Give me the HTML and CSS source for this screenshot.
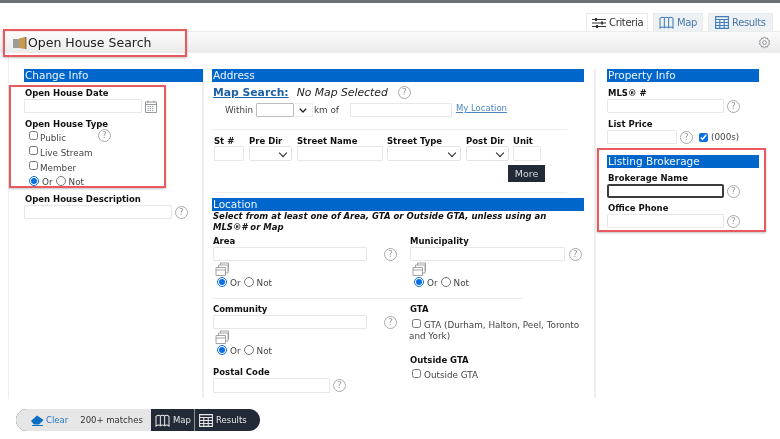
FILE: index.html
```html
<!DOCTYPE html>
<html lang="en">
<head>
<meta charset="utf-8">
<title>Open House Search</title>
<link rel="stylesheet" href="styles.css">
</head>
<body>
<svg class="defs" width="0" height="0">
  <symbol id="i-copy" viewBox="0 0 14 14"><path d="M1 5.500h9.500v8H1zM1 8h9.500M3.500 5.500V3h9.500v8h-2.500M5.500 3V1h8v8h-.5" fill="none" stroke="#9a9a9a" stroke-width=".9"/></symbol>
  <symbol id="i-map" viewBox="0 0 16 14"><path d="M1 2.500c2-1.500 3-1.500 4.700-.5v10.500c-1.700-1-2.700-1-4.700.5zM5.700 2c1.700-1 2.900-1 4.600 0v10.500c-1.700-1-2.900-1-4.600 0zM10.300 2c1.700-1 2.700-1 4.700.5V13c-2-1.500-3-1.500-4.700-.5z" fill="none" stroke="currentColor" stroke-width="1.100"/></symbol>
  <symbol id="i-grid" viewBox="0 0 14 13"><path d="M.6.600h12.800v11.800H.6zM.6 3.500h12.800M.6 6.500h12.800M.6 9.500h12.800M4.800 3.500v8.900M9.200 3.500v8.900" fill="none" stroke="currentColor" stroke-width="1.100"/></symbol>
</svg>

<div class="topline"></div>

<nav class="tabs">
  <a class="tab tab-on">
    <svg width="14" height="12" viewBox="0 0 14 12"><path d="M0 2.500h14M0 6h14M0 9.500h14" stroke="#333" stroke-width="1"/><path d="M4 1v3M10 4.500v3M5 8v3" stroke="#333" stroke-width="2"/></svg>
    Criteria</a>
  <a class="tab"><svg width="15" height="13"><use href="#i-map"/></svg>Map</a>
  <a class="tab"><svg width="14" height="13"><use href="#i-grid"/></svg>Results</a>
</nav>

<header class="titlebar">
  <svg class="door" width="14" height="12" viewBox="0 0 14 12"><rect x="0" y="2" width="6" height="9" fill="#9b9b9b"/><path d="M6 1.500 12 0v12l-6-1z" fill="#c89a4c"/><rect x="12" y="0" width="1.500" height="12" fill="#8d7a55"/></svg>
  <h1 class="title">Open House Search</h1>
  <svg class="gear" width="13" height="13" viewBox="0 0 24 24"><path d="M12 1.500l2 3 3.500-.8.800 3.500 3.200 1.800-1.500 3 1.500 3-3.200 1.800-.8 3.500-3.500-.8-2 3-2-3-3.500.8-.8-3.500L2.500 15l1.500-3-1.500-3 3.200-1.800.8-3.500 3.500.8z" fill="none" stroke="#8a8f94" stroke-width="1.700"/><circle cx="12" cy="12" r="3.500" fill="none" stroke="#8a8f94" stroke-width="1.700"/></svg>
</header>

<main class="columns">
  <section class="col col-left">
    <h2 class="bar">Change Info</h2>
    <label class="lbl">Open House Date</label>
    <div class="row">
      <input class="inp w118" type="text">
      <svg class="cal" width="12" height="13" viewBox="0 0 12 13"><path d="M.5 2h11v10.500H.5zM.5 4.500h11M3 .5V3M9 .5V3" fill="none" stroke="#8a9096" stroke-width=".9"/><path d="M2.500 6.500h7M2.500 8.500h7M2.500 10.500h7" stroke="#8a9096" stroke-dasharray="1.300 1"/></svg>
    </div>
    <label class="lbl">Open House Type</label>
    <div class="typewrap">
      <div class="check"><input type="checkbox"><span>Public</span><i class="help help-type">?</i></div>
      <div class="check"><input type="checkbox"><span>Live Stream</span></div>
      <div class="check"><input type="checkbox"><span>Member</span></div>
      <div class="ornot"><input type="radio" name="t" checked><span>Or</span><input type="radio" name="t"><span>Not</span></div>
    </div>
    <label class="lbl desc">Open House Description</label>
    <div class="row"><input class="inp w148" type="text"><i class="help">?</i></div>
  </section>

  <section class="col col-mid">
    <h2 class="bar">Address</h2>
    <div class="mapline">
      <a class="maplink">Map Search:</a>
      <em class="nomap">No Map Selected</em>
      <i class="help">?</i>
    </div>
    <div class="within">
      <span>Within</span>
      <span class="combo"><input class="inp w38" type="text"><span class="combo-arrow"><svg width="8" height="5" viewBox="0 0 8 5"><path d="M.8.800 4 4l3.200-3.200" fill="none" stroke="#222" stroke-width="1.300"/></svg></span></span>
      <span class="km">km of</span>
      <input class="inp w102" type="text">
      <a class="myloc">My Location</a>
    </div>
    <hr class="rule rule-a">
    <div class="street">
      <div class="sf"><label class="lbl">St #</label><input class="inp" type="text"></div>
      <div class="sf"><label class="lbl">Pre Dir</label><span class="sel"></span></div>
      <div class="sf"><label class="lbl">Street Name</label><input class="inp" type="text"></div>
      <div class="sf"><label class="lbl">Street Type</label><span class="sel"></span></div>
      <div class="sf"><label class="lbl">Post Dir</label><span class="sel"></span></div>
      <div class="sf"><label class="lbl">Unit</label><input class="inp" type="text"></div>
    </div>
    <div class="morerow"><button class="more" type="button">More</button></div>
    <hr class="rule rule-b">
    <h2 class="bar">Location</h2>
    <p class="note">Select from at least one of Area, GTA or Outside GTA, unless using an MLS®# or Map</p>
    <div class="loc">
      <div class="loc-cell">
        <label class="lbl">Area</label>
        <div class="row"><input class="inp w154" type="text"><i class="help help-far">?</i></div>
        <svg class="copy" width="14" height="14"><use href="#i-copy"/></svg>
        <div class="ornot"><input type="radio" name="a" checked><span>Or</span><input type="radio" name="a"><span>Not</span></div>
      </div>
      <div class="loc-cell">
        <label class="lbl">Municipality</label>
        <div class="row"><input class="inp w155" type="text"><i class="help help-m">?</i></div>
        <svg class="copy" width="14" height="14"><use href="#i-copy"/></svg>
        <div class="ornot"><input type="radio" name="m" checked><span>Or</span><input type="radio" name="m"><span>Not</span></div>
      </div>
      <hr class="rule rule-c">
      <div class="loc-cell">
        <label class="lbl">Community</label>
        <div class="row"><input class="inp w154" type="text"><i class="help help-far">?</i></div>
        <svg class="copy" width="14" height="14"><use href="#i-copy"/></svg>
        <div class="ornot"><input type="radio" name="c" checked><span>Or</span><input type="radio" name="c"><span>Not</span></div>
        <label class="lbl postal">Postal Code</label>
        <div class="row"><input class="inp w117 tall" type="text"><i class="help">?</i></div>
      </div>
      <div class="loc-cell">
        <label class="lbl">GTA</label>
        <p class="wrapcheck"><input type="checkbox">GTA (Durham, Halton, Peel, Toronto and York)</p>
        <label class="lbl outside">Outside GTA</label>
        <p class="wrapcheck wrapcheck-b"><input type="checkbox">Outside GTA</p>
      </div>
    </div>
  </section>

  <section class="col col-right">
    <h2 class="bar">Property Info</h2>
    <label class="lbl">MLS® #</label>
    <div class="row"><input class="inp w117" type="text"><i class="help">?</i></div>
    <label class="lbl">List Price</label>
    <div class="row price"><input class="inp w70" type="text"><i class="help">?</i><input class="thou" type="checkbox" checked><span class="txt">(000s)</span></div>
    <h2 class="bar brokerage">Listing Brokerage</h2>
    <label class="lbl tight">Brokerage Name</label>
    <div class="row"><input class="inp w117 focus" type="text"><i class="help">?</i></div>
    <label class="lbl tight">Office Phone</label>
    <div class="row"><input class="inp w117" type="text"><i class="help">?</i></div>
  </section>
</main>

<footer class="pillbar">
  <div class="pill">
    <div class="pill-light">
      <a class="clear"><svg width="13" height="11" viewBox="0 0 13 11"><path d="M0 6 6 .5 12.500 5 8 9.500H3z" fill="#0a6fc2"/><path d="M1 10.500h11" stroke="#0a6fc2"/></svg>Clear</a>
      <span class="matches">200+ matches</span>
    </div>
    <a class="pill-btn"><svg width="15" height="13"><use href="#i-map"/></svg>Map</a>
    <a class="pill-btn pill-last"><svg width="14" height="13"><use href="#i-grid"/></svg>Results</a>
  </div>
</footer>

<div class="mark mark-title"></div>
<div class="mark mark-left"></div>
<div class="mark mark-right"></div>
</body>
</html>
```

FILE: styles.css
```css
* { box-sizing: border-box; }
html, body { margin: 0; padding: 0; }
body {
  position: relative;
  width: 780px;
  height: 439px;
  overflow: hidden;
  background: #fff;
  color: #111;
  font-family: "DejaVu Sans", Verdana, sans-serif;
  font-size: 9px;
  filter: blur(.4px);
}
.defs { position: absolute; }
.topline { height: 3px; background: #6d7073; }

.tabs { display: flex; justify-content: flex-end; gap: 5px; height: 18px; margin-top: 10px; padding-right: 7px; }
.tab {
  display: flex; align-items: center; gap: 3px;
  height: 18px; padding: 0 0 0 5px;
  background: #eef1f4; border: 1px solid #e8eaec; border-bottom: 0;
  color: #4a78a8; font-size: 10px; letter-spacing: -.35px;
  white-space: nowrap;
}
.tab-on { background: #fff; color: #333; width: 62px; }
.tab svg { color: #3f7cb8; flex: none; }
.tab:nth-child(2) { width: 50px; }
.tab:nth-child(3) { width: 65px; padding-left: 6px; }

.titlebar {
  display: flex; align-items: center;
  height: 22px; padding: 0 9px 0 13px;
  background: linear-gradient(#fbfbfb, #ebebeb);
  border-top: 1px solid #ececec;
}
.door { margin-right: 1px; }
.title { flex: 1; margin: 0; font-size: 12.500px; font-weight: 400; color: #222; }

.columns {
  display: grid;
  grid-template-columns: 180px 391px 152px;
  height: 346px;
  margin-left: 8px;
  padding: 16px 0 0 15px;
  border-left: 1px solid #eee;
}
.col { min-width: 0; }
.col-left { border-right: 2px solid #eeeeee; height: 329px; }
.col-left .bar { width: 179px; }
.col-mid { padding: 0 0 0 8px; }
.col-mid .bar { width: 372px; }
.col-right { border-left: 2px solid #eeeeee; margin-left: -1px; padding-left: 11px; height: 329px; width: 165px; }
.col-right .bar { width: 152px; }

.bar {
  height: 13px; margin: 0; padding-left: 1px;
  background: #0066cc; color: #eef5ff;
  font-size: 10.500px; line-height: 13px; font-weight: 400;
}
.lbl { display: block; height: 11px; margin-top: 6px; padding-left: 1px; font-size: 8.500px; font-weight: 700; line-height: 11px; color: #111; white-space: nowrap; }
.tight { margin-top: 5px; }
.row { display: flex; align-items: center; gap: 3px; }
.inp { display: block; height: 14px; padding: 0; margin: 0; background: #fff; border: 1px solid #e7e7e7; border-radius: 1px; outline: 0; }
.tall { height: 15px; }
.w38 { width: 38px; } .w70 { width: 70px; } .w102 { width: 102px; } .w117 { width: 117px; }
.w118 { width: 118px; } .w148 { width: 148px; } .w154 { width: 154px; } .w155 { width: 155px; }
.focus { border: 2px solid #3b3b3b; border-radius: 2px; }
.help {
  display: inline-flex; align-items: center; justify-content: center; flex: none;
  width: 13px; height: 13px;
  border: 1px solid #a8a8a8; border-radius: 50%;
  color: #9a9a9a; font-size: 9px; font-style: normal; line-height: 1;
}
.help-far { margin-left: 14px; }
.help-m { margin-left: 1px; }
input[type=checkbox], input[type=radio] { margin: 0; accent-color: #0a6fe0; }
input[type=checkbox] { width: 9px; height: 9px; }
input[type=radio] { width: 10px; height: 10px; }

.typewrap { position: relative; padding-left: 5px; }
.check { display: flex; align-items: flex-start; height: 15px; padding-top: 1px; gap: 2px; color: #444; font-size: 8.800px; }
.check span { padding-top: 2px; }
.help-type { position: absolute; left: 74px; top: -1px; }
.ornot { display: flex; align-items: center; gap: 3px; height: 11px; color: #444; font-size: 8.800px; }
.ornot span { padding-top: 3px; }
.desc { margin-top: 8px; }

.mapline { display: flex; align-items: center; height: 16px; margin-top: 2px; padding-left: 1px; }
.maplink { color: #1d5fa8; font-size: 10.800px; font-weight: 700; text-decoration: underline; }
.nomap { margin-left: 8px; font-size: 10.800px; color: #222; }
.mapline .help { margin-left: 10px; }
.within { display: flex; align-items: center; height: 14px; margin-top: 3px; padding-left: 13px; color: #444; font-size: 8.800px; }
.combo { display: flex; margin-left: 3px; }
.combo .inp { border-color: #bdbdbd; }
.combo-arrow { display: flex; align-items: center; justify-content: center; width: 19px; height: 14px; border: 1px solid #eee; border-left: 0; }
.km { margin-left: 1px; }
.within > .inp { margin-left: 11px; }
.myloc { margin: -4px 0 0 4px; color: #4b86c4; font-size: 8.500px; text-decoration: underline; }
.rule { height: 1px; margin: 0; border: 0; background: #efefef; }
.rule-a { width: 355px; margin-top: 12px; }
.street { display: flex; }
.sf { flex: none; }
.sf .lbl { height: 10px; margin-top: 6px; padding-left: 0; }
.sf .inp, .sel { display: block; height: 15px; }
.sf:nth-child(1) { width: 37px; padding-left: 2px; } .sf:nth-child(1) .inp { width: 30px; }
.sf:nth-child(2) { width: 48px; } .sf:nth-child(2) .sel { width: 43px; }
.sf:nth-child(3) { width: 90px; } .sf:nth-child(3) .inp { width: 86px; }
.sf:nth-child(4) { width: 79px; } .sf:nth-child(4) .sel { width: 74px; }
.sf:nth-child(5) { width: 47px; } .sf:nth-child(5) .sel { width: 43px; }
.sf:nth-child(6) .inp { width: 28px; }
.sel { border: 1px solid #e4e4e4; border-radius: 2px; position: relative; }
.sel::after {
  content: ""; position: absolute; right: 5px; top: 3px;
  width: 5px; height: 5px;
  border-right: 1.300px solid #222; border-bottom: 1.300px solid #222;
  transform: rotate(45deg);
}
.morerow { display: flex; justify-content: flex-end; padding-right: 50px; margin-top: 4px; }
.more { width: 37px; height: 17px; padding: 0; background: #232a37; border: 0; color: #d8dade; font: 9.500px "DejaVu Sans", sans-serif; }
.rule-b { width: 355px; margin-top: 10px; margin-bottom: 5px; }
.note { margin: 0; height: 21px; max-width: 345px; padding-left: 1px; font-size: 8.500px; line-height: 10.500px; font-weight: 700; font-style: italic; color: #111; }
.loc { display: grid; grid-template-columns: 197px 175px; }
.loc-cell { min-width: 0; }
.loc-cell .lbl { margin-top: 4px; }
.loc-cell .row { margin-left: 1px; }
.copy { display: block; margin: 1px 0 0 3px; }
.loc-cell .ornot { margin: 0 0 0 5px; }
.rule-c { grid-column: 1 / -1; width: 311px; margin-top: 11px; margin-bottom: 1px; }
.loc-cell .postal { margin-top: 12px; }
.wrapcheck { margin: 4px 0 0; width: 175px; color: #444; font-size: 8.800px; line-height: 11px; }
.wrapcheck input { margin: 0 3px 0 3px; vertical-align: -0.5px; }
.wrapcheck-b { margin-top: 3px; }
.loc-cell .outside { margin-top: 13px; }
.price .thou { margin-left: 3px; }
.txt { color: #444; font-size: 8.800px; }
.brokerage { margin-top: 11px; }

.pillbar { padding: 0 0 0 16px; height: 22px; margin-top: 10px; }
.pill { display: flex; width: 244px; height: 22px; background: #232a37; border-radius: 11px; overflow: hidden; color: #e8e8e8; font-size: 8.500px; }
.pill-light { display: flex; align-items: center; width: 135px; padding-left: 15px; background: #e6e6e6; }
.clear { display: flex; align-items: center; gap: 2px; color: #2a78c2; }
.matches { margin-left: 12px; color: #333; }
.pill-btn { display: flex; align-items: center; gap: 3px; width: 44px; padding-left: 4px; border-right: 1px solid #8f949c; }
.pill-last { flex: 1; border: 0; }

.mark { position: absolute; border: 2px solid #e95a60; box-shadow: 0 1px 2px rgba(0,0,0,.25); pointer-events: none; }
.mark-title { left: 3px; top: 29px; width: 184px; height: 28px; }
.mark-left { left: 9px; top: 85px; width: 157px; height: 103px; }
.mark-right { left: 597px; top: 148px; width: 169px; height: 84px; }
```
